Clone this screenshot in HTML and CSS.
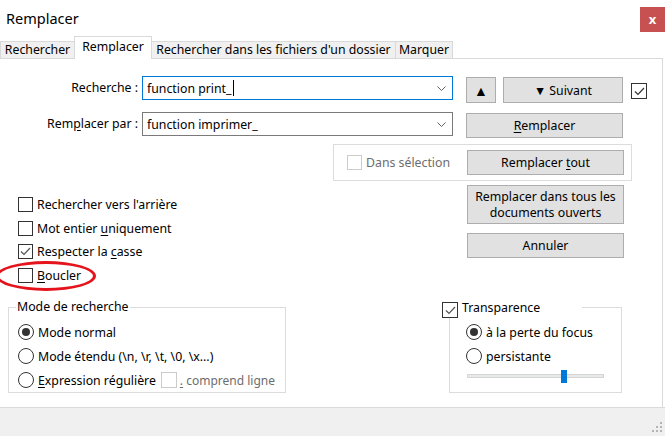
FILE: index.html
```html
<!DOCTYPE html>
<html lang="fr">
<head>
<meta charset="utf-8">
<title>Remplacer</title>
<link rel="stylesheet" href="styles.css">
</head>
<body>
<div class="window">
  <div class="titlebar">
    <span class="title">Remplacer</span>
    <span class="close">x</span>
  </div>
  <div class="tabs">
    <div class="tab t1">Rechercher</div>
    <div class="tab t2 active">Remplacer</div>
    <div class="tab t3">Rechercher dans les fichiers d'un dossier</div>
    <div class="tab t4">Marquer</div>
  </div>
  <div class="panel">
    <div class="row row1">
      <span class="field-label">Recherche :</span>
      <div class="combo focus">
        <span class="combo-text">function print_</span><span class="caret"></span>
        <svg class="chev" width="9" height="5" viewBox="0 0 9 5"><polyline points="0.5,0.5 4.5,4.5 8.5,0.5" fill="none" stroke="#606060" stroke-width="1"/></svg>
      </div>
      <button class="btn btn-up">▲</button>
      <button class="btn btn-next">▼ Suivant</button>
      <span class="check checked sticky">
        <svg width="13" height="13" viewBox="0 0 13 13"><polyline points="2,6.5 5,9.5 11,3" fill="none" stroke="#333" stroke-width="1.2"/></svg>
      </span>
    </div>
    <div class="row row2">
      <span class="field-label">Rem<u>p</u>lacer par :</span>
      <div class="combo">
        <span class="combo-text">function imprimer_</span>
        <svg class="chev" width="9" height="5" viewBox="0 0 9 5"><polyline points="0.5,0.5 4.5,4.5 8.5,0.5" fill="none" stroke="#606060" stroke-width="1"/></svg>
      </div>
      <button class="btn btn-wide"><u>R</u>emplacer</button>
    </div>
    <div class="mid">
      <div class="options">
        <div class="opt"><span class="check"></span><span>Rechercher vers l'arrière</span></div>
        <div class="opt"><span class="check"></span><span>Mot entier <u>u</u>niquement</span></div>
        <div class="opt"><span class="check checked">
          <svg width="13" height="13" viewBox="0 0 13 13"><polyline points="2,6.5 5,9.5 11,3" fill="none" stroke="#555" stroke-width="1.2"/></svg>
        </span><span>Respecter la <u>c</u>asse</span></div>
        <div class="opt"><span class="check"></span><span><u>B</u>oucler</span></div>
      </div>
      <div class="actions">
        <div class="selgroup">
          <span class="check disabled"></span>
          <span class="dim sel-label">Dans sélection</span>
          <button class="btn btn-wide btn-all">Remplacer <u>t</u>out</button>
        </div>
        <button class="btn btn-wide btn-tall">Remplacer dans tous les<br>documents ouverts</button>
        <button class="btn btn-wide btn-cancel">Annuler</button>
      </div>
    </div>
    <div class="bottom">
      <fieldset class="group mode">
        <legend class="mode-legend">Mode de recherche</legend>
        <div class="radio-row"><span class="radio on"></span><span>Mode normal</span></div>
        <div class="radio-row"><span class="radio"></span><span>Mode étendu (\n, \r, \t, \0, \x...)</span></div>
        <div class="radio-row"><span class="radio"></span><span><u>E</u>xpression régulière</span><span class="check disabled regex-box"></span><span class="dim regex-label"><u>.</u> comprend ligne</span></div>
      </fieldset>
      <fieldset class="group transp">
        <legend class="transp-legend">
          <span class="check checked">
            <svg width="13" height="13" viewBox="0 0 13 13"><polyline points="2,6.5 5,9.5 11,3" fill="none" stroke="#555" stroke-width="1.2"/></svg>
          </span>
          <span>Transparence</span>
        </legend>
        <div class="radio-row"><span class="radio on"></span><span>à la perte du focus</span></div>
        <div class="radio-row"><span class="radio"></span><span>persistante</span></div>
        <div class="slider"><span class="thumb"></span></div>
      </fieldset>
    </div>
  </div>
  <div class="footer">
    <svg class="grip" width="12" height="12" viewBox="0 0 12 12" fill="#b4b4b4">
      <rect x="8" y="0" width="2" height="2"/>
      <rect x="4" y="4" width="2" height="2"/><rect x="8" y="4" width="2" height="2"/>
      <rect x="0" y="8" width="2" height="2"/><rect x="4" y="8" width="2" height="2"/><rect x="8" y="8" width="2" height="2"/>
    </svg>
  </div>
  <div class="annotation"></div>
</div>
</body>
</html>
```

FILE: styles.css
```css
* { box-sizing: border-box; }
html, body { margin: 0; padding: 0; }
body {
  width: 665px;
  height: 436px;
  overflow: hidden;
  background: #fff;
  font-family: "Noto Sans", "Open Sans", sans-serif;
  font-size: 12.3px;
  color: #000;
}
u { text-decoration: underline; text-underline-offset: 2px; }

.window {
  position: relative;
  width: 665px;
  height: 436px;
  display: flex;
  flex-direction: column;
}

/* Title bar */
.titlebar {
  height: 36px;
  flex: none;
  display: flex;
  justify-content: space-between;
  align-items: flex-start;
}
.title {
  font-size: 14.5px;
  line-height: 22px;
  margin: 7px 0 0 6px;
}
.close {
  width: 25px;
  height: 25px;
  margin-top: 7px;
  background: #c75050;
  color: #fff;
  font-weight: bold;
  font-size: 13px;
  display: flex;
  align-items: center;
  justify-content: center;
  padding-bottom: 2px;
}

/* Tabs */
.tabs {
  height: 22px;
  flex: none;
  display: flex;
  align-items: flex-end;
  position: relative;
  z-index: 2;
}
.tab {
  height: 17px;
  border: 1px solid #d9d9d9;
  border-bottom: none;
  background: #f0f0f0;
  line-height: 16px;
  text-align: center;
  white-space: nowrap;
  margin-right: -1px;
}
.tab.active {
  height: 23px;
  margin-bottom: -1px;
  background: #fff;
  line-height: 19px;
  position: relative;
  z-index: 1;
}
.t1 { width: 75px; }
.t2 { width: 78px; }
.t3 { width: 245px; }
.t4 { width: 58px; }

/* Panel */
.panel {
  height: 349px;
  flex: none;
  width: 663px;
  border-top: 1px solid #d9d9d9;
  border-right: 1px solid #d9d9d9;
  padding-top: 17px;
}
.row {
  display: flex;
  align-items: flex-start;
}
.row1 { height: 27px; }
.row2 { height: 26px; margin-top: 9px; }
.field-label {
  width: 138px;
  margin-right: 4px;
  text-align: right;
  line-height: 24px;
  white-space: nowrap;
}
.combo {
  width: 311px;
  height: 24px;
  border: 1px solid #7a7a7a;
  display: flex;
  align-items: center;
  padding-left: 4px;
  padding-right: 6px;
}
.combo.focus { border-color: #0078d7; }
.combo-text { white-space: nowrap; }
.caret {
  width: 1px;
  height: 16px;
  background: #000;
  margin-left: 1px;
}
.chev { margin-left: auto; }

.btn {
  font-family: inherit;
  font-size: 12.3px;
  color: #000;
  background: #e1e1e1;
  border: 1px solid #adadad;
  padding: 0;
  margin: 0;
  line-height: 15px;
}
.btn-up {
  width: 30px;
  height: 26px;
  margin: 1px 0 0 13px;
  font-size: 14px;
}
.btn-next {
  width: 120px;
  height: 26px;
  margin: 1px 0 0 7px;
}
.btn-wide { width: 157px; height: 25px; }
.row2 .btn-wide { margin: 1px 0 0 13px; }

.check {
  width: 15px;
  height: 15px;
  border: 1px solid #333;
  background: #fff;
  display: inline-flex;
  align-items: center;
  justify-content: center;
  flex: none;
}
.check.sticky { width: 16px; height: 16px; margin: 7px 0 0 8px; }
.check.disabled { border-color: #cccccc; }
.dim { color: #6d6d6d; }

/* Middle */
.mid {
  display: flex;
  margin-top: 6px;
  height: 143px;
}
.options {
  width: 333px;
  padding-top: 49px;
}
.opt {
  height: 23.5px;
  display: flex;
  align-items: center;
  padding-left: 18px;
}
.opt .check { margin-right: 4px; }

.actions {
  display: flex;
  flex-direction: column;
  align-items: flex-start;
}
.selgroup {
  width: 299px;
  height: 37px;
  border: 1px solid #dcdcdc;
  display: flex;
  align-items: center;
  padding-left: 13px;
}
.sel-label { margin-left: 4px; }
.btn-all { margin-left: auto; margin-right: 7px; }
.btn-tall {
  height: 39px;
  margin: 4px 0 0 134px;
  line-height: 16px;
}
.btn-cancel { margin: 9px 0 0 134px; }

/* Bottom */
.bottom {
  display: flex;
  margin-top: 13px;
}
.group {
  margin: 0;
  padding: 0;
  border: 1px solid #dcdcdc;
  min-width: 0;
}
.mode {
  width: 278px;
  height: 93px;
  margin-left: 8px;
  padding: 6px 0 0 9px;
}
.mode-legend {
  line-height: 14px;
  padding: 0 2px 0 1px;
  margin-left: -2px;
}
.radio-row {
  height: 24px;
  display: flex;
  align-items: center;
  white-space: nowrap;
}
.radio {
  width: 16px;
  height: 16px;
  border: 1px solid #333;
  border-radius: 50%;
  background: #fff;
  display: inline-flex;
  align-items: center;
  justify-content: center;
  margin-right: 4px;
  flex: none;
}
.radio.on::after {
  content: "";
  width: 8px;
  height: 8px;
  border-radius: 50%;
  background: #333;
}
.regex-box { margin: 0 3px 0 5px; width: 16px; height: 16px; }
.regex-label { font-size: 12px; }

.transp {
  width: 173px;
  height: 93px;
  margin-left: 163px;
  padding: 6px 0 0 16px;
}
.transp-legend {
  height: 14px;
  width: 140px;
  margin-left: -24px;
  padding: 0;
  display: flex;
  align-items: flex-start;
}
.transp-legend .check {
  width: 16px;
  height: 16px;
  margin-top: 2px;
  margin-right: 4px;
}
.transp-legend span:last-child { line-height: 16px; }
.slider {
  position: relative;
  width: 137px;
  height: 4px;
  margin-top: 6px;
  margin-left: 1px;
  background: #e7eaea;
  border: 1px solid #d6d6d6;
}
.thumb {
  position: absolute;
  left: 93px;
  top: -5px;
  width: 6px;
  height: 13px;
  background: #0078d7;
}

/* Footer */
.footer {
  flex: 1;
  background: #f0f0f0;
  border-top: 1px solid #dadada;
  position: relative;
}
.grip {
  position: absolute;
  right: 1px;
  bottom: 2px;
}

/* Red annotation ellipse */
.annotation {
  position: absolute;
  left: -4px;
  top: 261px;
  width: 100px;
  height: 30px;
  border: 3px solid #e5141c;
  border-radius: 50%;
}
```
